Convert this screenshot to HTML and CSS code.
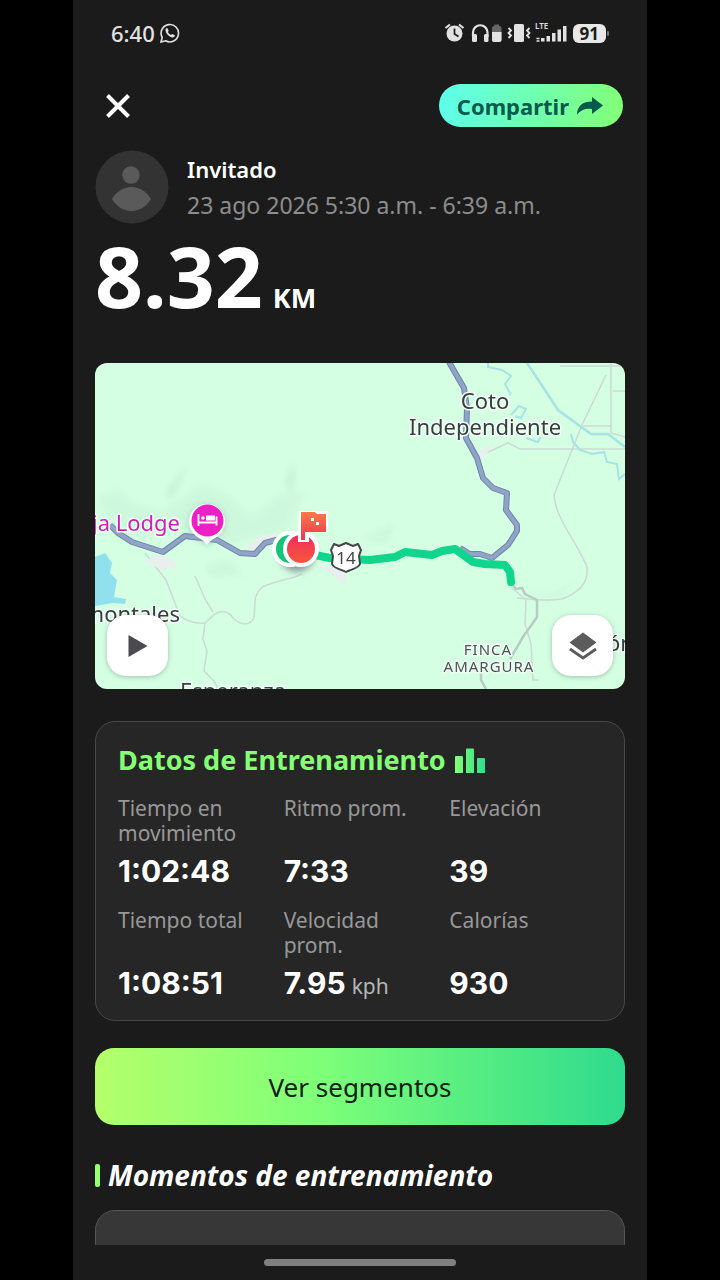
FILE: index.html
```html
<!DOCTYPE html>
<html lang="es">
<head>
<meta charset="utf-8">
<meta name="viewport" content="width=device-width, initial-scale=1">
<title>Entrenamiento</title>
<link rel="stylesheet" href="styles.css">
</head>
<body>
<div class="phone">
  <div class="status">
    <div class="status-left">
      <span class="clock">6:40</span>
      <svg width="20" height="20" viewBox="0 0 20 20" fill="none" stroke="#e2e2e2" stroke-width="1.6" aria-hidden="true">
        <path d="M1 19l1.2-4.6A8.7 8.7 0 1 1 5.600 17.800z"/>
        <path d="M5.500 6.800c0-1 .9-2 1.700-1.800l1.500 2.700-.8 1.400c.7 1.300 1.600 2.200 3 2.900l1.300-1.100 2.700 1.300c.2 1.200-1 2.300-2.200 2.300-3.600-.3-7-4-7.200-7.700z" fill="#e2e2e2" stroke="none"/>
      </svg>
    </div>
    <div class="status-right">
      <svg class="status-icons" width="124" height="22" viewBox="443 22 124 22" fill="none" aria-hidden="true">
        <circle cx="453.500" cy="33.500" r="8" fill="#e2e2e2"/>
        <path d="M444.500 28l4.500-3.500M462.500 28l-4.500-3.500" stroke="#e2e2e2" stroke-width="2.200"/>
        <path d="M453.500 28.500v5.500l4 2.500" stroke="#1b1b1b" stroke-width="1.700"/>
        <path d="M472 37v-4.500a7.200 7.200 0 0 1 14.500 0V37" stroke="#e2e2e2" stroke-width="2.200"/>
        <rect x="471" y="34" width="5" height="8" rx="1.500" fill="#e2e2e2"/>
        <rect x="483" y="34" width="4.500" height="8" rx="1.500" fill="#e2e2e2"/>
        <rect x="491" y="26" width="9.500" height="16" rx="2" fill="#666"/>
        <rect x="493.500" y="24.500" width="4.500" height="2" fill="#666"/>
        <path d="M491 32h9.500v8a2 2 0 0 1-2 2H493a2 2 0 0 1-2-2z" fill="#e2e2e2"/>
        <rect x="513" y="24" width="10" height="18" rx="1.500" fill="#e2e2e2"/>
        <path d="M507.500 28l2.500 2.500-2.500 2.500 2.500 2.500-2.500 2.500M528.500 28L526 30.500l2.500 2.500-2.500 2.500 2.500 2.500" stroke="#e2e2e2" stroke-width="1.800"/>
        <text class="lte" x="534" y="29">LTE</text>
        <path d="M535.500 38.500h3M535.500 41h3" stroke="#e2e2e2" stroke-width="1.500"/>
        <path d="M540 38h3.500v3.500H540zM545.500 36h3.500v5.500h-3.500zM551 33h3.500v8.500H551zM556.500 29.500h3.500v12h-3.500zM562 26h3.500v15.500H562z" fill="#e2e2e2"/>
      </svg>
      <span class="battery">91</span>
    </div>
  </div>

  <main class="content">
    <header class="topbar">
      <button class="close" type="button" aria-label="Cerrar">
        <svg width="24" height="24" viewBox="0 0 24 24" stroke="#fff" stroke-width="4" aria-hidden="true"><path d="M1.500 1.500l21 21M22.500 1.500l-21 21"/></svg>
      </button>
      <button class="share" type="button">Compartir
        <svg width="26" height="18" viewBox="0 0 26 18" fill="#085a4c" aria-hidden="true"><path d="M15 0L26 8.500 15 17v-5C9 11 4 12.500 0 17.500 0 9 6 4.500 15 4.500z"/></svg>
      </button>
    </header>

    <section class="user">
      <svg class="avatar" viewBox="0 0 74 74" aria-hidden="true">
        <circle cx="37" cy="37" r="36.500" fill="#333"/>
        <circle cx="36" cy="25" r="8.700" fill="#5a5a5a"/>
        <path d="M17 49c4-7 11-12 19.500-12S52 42 56 49c-4 7-11 12-19.500 12S21 56 17 49z" fill="#5a5a5a"/>
      </svg>
      <div class="user-text">
        <h1 class="name">Invitado</h1>
        <p class="date">23 ago 2026 5:30 a.m. - 6:39 a.m.</p>
      </div>
    </section>

    <p class="distance">8.32<span class="unit">KM</span></p>

    <section class="map" aria-label="Mapa">
      <svg class="map-art" viewBox="95 363 530 326" preserveAspectRatio="xMidYMid slice">
        <defs>
          <linearGradient id="flag" x1="0" y1="0" x2="0" y2="1"><stop offset="0" stop-color="#ff7a45"/><stop offset="1" stop-color="#ee3355"/></linearGradient>
          <linearGradient id="finish" x1="0" y1="0" x2="0" y2="1"><stop offset="0" stop-color="#ee2f5c"/><stop offset="1" stop-color="#f9563c"/></linearGradient>
          <filter id="soft" x="-50%" y="-50%" width="200%" height="200%"><feGaussianBlur stdDeviation="3"/></filter>
        </defs>
        <rect x="95" y="363" width="530" height="326" fill="#d5ffe3"/>
        <g fill="#b5dcc4" opacity="0.350" filter="url(#soft)">
          <path d="M188 463l-22 28 2 10 8-8z"/>
          <path d="M293 461l-8 20 6 16 4-18zM281 412l10 24-8-18z"/>
          <path d="M97 497l20-8 20 15 25 8 40-30 30 15 20 20 25-22 30-4-20 40-60 14-60-12-50 8z" opacity="0.500"/>
          <path d="M205 565l25-5 15 15-35 2zM360 540l35-18-8 22zM515 596l40-4 20-10-15 16z" opacity="0.600"/>
        </g>
        <g fill="none" stroke="#cbdcd5" stroke-width="1.600">
          <path d="M145 553l21 27 14 36c8 6 16 8 25 7l10-9c9-5 14-2 18 4 8 8 18 8 21-1 2-14-2-20 8-30 15-7 28-7 40-13"/>
          <path d="M195 576l10 23 8 13M205 623l-2 16 4 12-3 20 10 10 5 10"/>
          <path d="M475 458l33-15 12 6h86M540 449h85M560 366h65M611 363v70l14 4M606 375l-24 50-28 70c2 25 22 45 33 72 2 16-9 26-25 32-18 3-30 0-45-1M583 426h28M613 391h12M512 588l14 12-1 24 6 20 2 36 6 0"/>
        </g>
        <g fill="none" stroke="#b9cbc5" stroke-width="2.500">
          <path d="M511 583l5 6 6-1 3 6 12 6v17l-14 20-13 22M481 668v12l5 9"/>
        </g>
        <g fill="#e9eeee">
          <path d="M144 561l14-6 16 5 4 10-10-3-6 4-12-8zM246 547l16-12 16-2-8 14-14 6zM321 566l24-2v22zM477 453l17-10-8 12-6 4z"/>
        </g>
        <path d="M95 557l10-4 7 10-2 10 7 7-3 17 12 2-1 5-12-1-18 3z" fill="#91e0ee"/>
        <g fill="none" stroke="#a5e3e5" stroke-width="2">
          <path d="M527 363l14 21 17 26 33 24h17l17 13" stroke-width="2.500"/>
          <path d="M488 363v4l14 3 9 6-6 8 6 11M511 415l8-9 7 3-5 9-6-2M571 434l2 8 7 8 12 4 12-2 3 10 10 2 2 15 6-5M526 438l12 4 3-5"/>
        </g>
        <g fill="none" stroke-linejoin="round">
          <path d="M449 362l8 14 7 12 3 20-1 30 11 20 6 20 10 10 14 5-1 17 11 15v6l-9 14-16 13-12-4h-10l-10-6" stroke="#6f83aa" stroke-width="6"/>
          <path d="M449 362l8 14 7 12 3 20-1 30 11 20 6 20 10 10 14 5-1 17 11 15v6l-9 14-16 13-12-4h-10l-10-6" stroke="#8fa4c6" stroke-width="4"/>
          <path d="M110 525l8 8 14 9 31 10 22-16 32 4 23 13 15 1 10-11 15-4" stroke="#6f83aa" stroke-width="6"/>
          <path d="M110 525l8 8 14 9 31 10 22-16 32 4 23 13 15 1 10-11 15-4" stroke="#8fa4c6" stroke-width="4"/>
          <path d="M310 554l20 4 40 2 25-3 10-5 27 3 10-4 13-2 18 13 12 2 20 1 5 7 1 10" stroke="#11d58d" stroke-width="8" stroke-linecap="round"/>
        </g>

        <g class="place">
          <text x="485" y="409" text-anchor="middle">Coto</text>
          <text x="485" y="435" text-anchor="middle">Independiente</text>
          <text x="180" y="622" text-anchor="end">montales</text>
          <text x="233" y="699" text-anchor="middle">Esperanza</text>
          <text x="607" y="651">ón</text>
        </g>
        <text class="lodge" x="180" y="531" text-anchor="end">ja Lodge</text>
        <text class="farm" x="488" y="655" text-anchor="middle">FINCA</text>
        <text class="farm" x="489" y="672" text-anchor="middle">AMARGURA</text>

        <path d="M207 547c-3-5-7-7-11-10a18 18 0 1 1 22 0c-4 3-8 5-11 10z" fill="#8aa" opacity="0.500" filter="url(#soft)"/>
        <path d="M207 545c-3-5-7-6-11-9a18 18 0 1 1 22 0c-4 3-8 4-11 9z" fill="#fff"/>
        <circle cx="207.500" cy="520.500" r="16" fill="#ec20c4"/>
        <path d="M198.500 514v12M198.500 522.500h18M216.500 525.500v-9" stroke="#fff" stroke-width="1.800"/>
        <path d="M206 515.500h9v5h-9z" fill="#fff"/><circle cx="203" cy="518" r="1.800" fill="#fff"/>

        <circle cx="297" cy="554" r="18" fill="#446" opacity="0.500" filter="url(#soft)"/>
        <circle cx="290" cy="549" r="18" fill="#fff"/>
        <circle cx="290" cy="549" r="14" fill="#14c478"/>
        <circle cx="301" cy="549" r="18" fill="#fff"/>
        <circle cx="301" cy="549" r="14" fill="url(#finish)"/>
        <path d="M299 511h29v21h-19v10h-11v-3z" fill="#fff"/>
        <path d="M301 512h14l2 2h9v18h-21v8h-4z" fill="url(#flag)"/>
        <path d="M311 518h3v3h-3zM316 522h3v3h-3z" fill="#fff"/>

        <path d="M334 544l5 2 7-3 7 3 5-2 3 6-2 6 1 8c-2 5-9 5-14 8-5-3-12-3-14-8l1-8-2-6z" fill="#fff" stroke="#454545" stroke-width="2" stroke-linejoin="round"/>
        <text class="route-number" x="346" y="564" text-anchor="middle">14</text>
      </svg>
      <button class="map-button play" type="button" aria-label="Reproducir">
        <svg width="20" height="22" viewBox="0 0 20 22" fill="#4a4a4f" aria-hidden="true"><path d="M0.500 0v22L19.500 11z"/></svg>
      </button>
      <button class="map-button layers" type="button" aria-label="Capas">
        <svg width="28" height="28" viewBox="0 0 28 28" aria-hidden="true"><path d="M14 0.500L27.500 10.500 14 20.500 0.500 10.500z" fill="#5c5c5c"/><path d="M1 17l13 9 13-9" fill="none" stroke="#5c5c5c" stroke-width="2.800"/></svg>
      </button>
    </section>

    <section class="card">
      <h2 class="card-title">Datos de Entrenamiento
        <svg width="30" height="25" viewBox="0 0 30 25" aria-hidden="true">
          <defs><linearGradient id="bars"><stop offset="0" stop-color="#84ff74"/><stop offset="1" stop-color="#2fdc90"/></linearGradient></defs>
          <path d="M0 9q0-1 1-1h6q1 0 1 1v16H0zM11 1.500q0-1 1-1h6q1 0 1 1V25h-8zM22 11q0-1 1-1h6q1 0 1 1v14h-8z" fill="url(#bars)"/>
        </svg>
      </h2>
      <dl class="stats">
        <div><dt>Tiempo en movimiento</dt><dd>1:02:48</dd></div>
        <div><dt>Ritmo prom.</dt><dd>7:33</dd></div>
        <div><dt>Elevación</dt><dd>39</dd></div>
        <div><dt>Tiempo total</dt><dd>1:08:51</dd></div>
        <div><dt>Velocidad prom.</dt><dd>7.95<span class="small-unit">kph</span></dd></div>
        <div><dt>Calorías</dt><dd>930</dd></div>
      </dl>
    </section>

    <button class="segments" type="button">Ver segmentos</button>

    <h2 class="moments">Momentos de entrenamiento</h2>
    <section class="moments-card"></section>
  </main>
  <div class="nav"><span class="nav-pill"></span></div>
</div>
</body>
</html>
```
FILE: styles.css
```css
* { box-sizing: border-box; }
body, h1, h2, p, dl, dd { margin: 0; }
body {
  background: #000;
  color: #fff;
  font-family: "Noto Sans", sans-serif;
}
button { border: 0; padding: 0; font-family: inherit; cursor: pointer; }
svg { display: block; flex: none; }

.phone {
  display: flex;
  flex-direction: column;
  max-width: 574px;
  height: 100vh;
  margin: 0 auto;
  background: #1b1b1b;
}

.status {
  display: flex;
  justify-content: space-between;
  align-items: center;
  height: 66px;
  padding: 0 38px;
  color: #e2e2e2;
}
.status-left, .status-right { display: flex; align-items: center; gap: 5px; }
.status-icons { overflow: visible; }
.clock { font-size: 22px; font-weight: 500; }
.lte { font-size: 8px; font-weight: 600; fill: #e2e2e2; }
.battery {
  position: relative;
  margin-right: 3px;
  padding: 0 7px;
  border-radius: 6px;
  background: #e8e8e8;
  color: #1b1b1b;
  font-size: 17px;
  font-weight: 700;
  line-height: 19px;
}
.battery::after {
  content: "";
  position: absolute;
  top: 7px;
  right: -3px;
  width: 2px;
  height: 5px;
  border-radius: 1px;
  background: #777;
}

.content {
  display: flex;
  flex: 1;
  flex-direction: column;
  min-height: 0;
  padding: 18px 22px 0;
  overflow: hidden;
}
.content > * { flex: none; }

.topbar { display: flex; justify-content: space-between; align-items: center; }
.close { padding: 9px 11px; background: none; }
.share {
  display: flex;
  align-items: center;
  gap: 8px;
  height: 43px;
  margin-right: 2px;
  padding: 0 20px 0 18px;
  border-radius: 22px;
  background: linear-gradient(100deg, #5dffee, #83ff75);
  color: #085a4c;
  font-size: 22px;
  font-weight: 700;
}

.user { display: flex; align-items: center; gap: 18px; margin-top: 23px; }
.avatar { width: 74px; height: 74px; }
.name { font-size: 22px; font-weight: 600; line-height: 36px; }
.date { color: #8d8d8d; font-size: 23px; line-height: 36px; }

.distance {
  display: flex;
  align-items: baseline;
  gap: 10px;
  margin-top: 2px;
  font-size: 84px;
  font-weight: 700;
  line-height: 100px;
}
.unit { font-size: 27px; font-weight: 700; line-height: 1; }

.map {
  position: relative;
  height: 326px;
  margin-top: 37px;
  overflow: hidden;
  border-radius: 12px;
}
.map-art { width: 100%; height: 100%; }
.map-art text { paint-order: stroke; stroke: #effff5; stroke-width: 3px; stroke-linejoin: round; }
.place { font-size: 22px; fill: #3c3c40; }
.lodge { font-size: 22px; fill: #cf1fb8; }
.farm { font-size: 15px; fill: #505055; letter-spacing: 1px; }
.map-art .route-number { font-size: 17px; fill: #454545; stroke: none; }
.map-button {
  position: absolute;
  bottom: 13px;
  display: grid;
  place-items: center;
  width: 61px;
  height: 61px;
  border-radius: 19px;
  background: #fff;
  box-shadow: 0 1px 5px rgba(0, 0, 0, 0.25);
}
.play { left: 12px; }
.layers { right: 12px; }

.card {
  margin-top: 32px;
  padding: 18px 9px 12px 22px;
  border: 1px solid #484848;
  border-radius: 20px;
  background: #262626;
}
.card-title {
  display: flex;
  align-items: center;
  gap: 9px;
  color: #84ff74;
  font-size: 27px;
  font-weight: 700;
  line-height: 40px;
}
.stats {
  display: grid;
  grid-template-columns: repeat(3, 1fr);
  gap: 12px 0;
  margin-top: 16px;
}
.stats dt {
  min-height: 50px;
  padding-right: 30px;
  color: #989898;
  font-size: 21px;
  line-height: 25px;
}
.stats dd {
  display: flex;
  align-items: baseline;
  gap: 6px;
  font-family: Inter, sans-serif;
  font-size: 30px;
  font-weight: 700;
  line-height: 50px;
}
.small-unit {
  color: #b5b5b5;
  font-family: "Noto Sans", sans-serif;
  font-size: 21px;
  font-weight: 400;
  line-height: 1;
}

.segments {
  height: 77px;
  margin-top: 27px;
  border-radius: 19px;
  background: linear-gradient(90deg, #b5ff6b, #7eff78 42%, #2fdb8d);
  color: #0b200f;
  font-size: 26px;
}

.moments {
  display: flex;
  align-items: center;
  gap: 8px;
  margin-top: 30px;
  font-size: 28px;
  font-style: italic;
  font-weight: 700;
  line-height: 40px;
}
.moments::before { content: ""; width: 5px; height: 23px; border-radius: 2px; background: #97ff72; }
.moments-card {
  height: 240px;
  margin-top: 15px;
  border: 1px solid #555;
  border-radius: 20px;
  background: #383737;
}

.nav { display: grid; place-items: center; height: 35px; }
.nav-pill { width: 192px; height: 7px; border-radius: 4px; background: #808080; }
```
